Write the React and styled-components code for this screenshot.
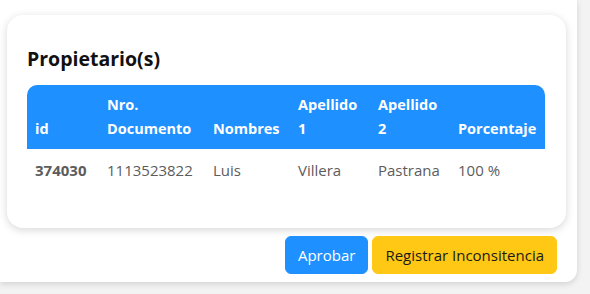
import React from "react";
import styled, { createGlobalStyle } from "styled-components";

const GlobalStyle = createGlobalStyle`
  html, body {
    margin: 0;
    padding: 0;
    background: #f3f3f3;
    font-family: "Open Sans", "Noto Sans", sans-serif;
  }
`;

const Page = styled.div`
  width: 590px;
  height: 294px;
  overflow: hidden;
`;

const Panel = styled.div`
  width: 577px;
  box-sizing: border-box;
  background: #fff;
  padding: 15px 11px 8px 7px;
  border-radius: 0 0 12px 0;
  box-shadow: 0 2px 6px rgba(0, 0, 0, 0.14);
`;

const Card = styled.div`
  background: #fff;
  border-radius: 16px;
  padding: 31px 20px 39px;
  box-shadow: 0 2px 8px rgba(0, 0, 0, 0.16);
`;

const Title = styled.h5`
  margin: 0 0 14px;
  font-size: 19.5px;
  font-weight: 700;
  line-height: 25px;
  color: #111;
`;

const Table = styled.table`
  width: 518px;
  table-layout: fixed;
  border-collapse: separate;
  border-spacing: 0;
  font-size: 14.5px;
  line-height: 24px;
`;

const Th = styled.th`
  background: #1e90ff;
  color: #fff;
  font-weight: 700;
  text-align: left;
  vertical-align: bottom;
  padding: 8px;
  &:first-child {
    border-top-left-radius: 10px;
  }
  &:last-child {
    border-top-right-radius: 10px;
  }
`;

const Td = styled.td`
  color: #5c5c5c;
  padding: 9px 8px 7px;
  font-size: 15px;
  font-weight: ${(p) => (p.$strong ? 700 : 400)};
  white-space: nowrap;
`;

const Actions = styled.div`
  display: flex;
  justify-content: flex-end;
  gap: 4px;
  margin: 8px 9px 0 0;
`;

const Button = styled.button`
  font-family: inherit;
  font-size: 15px;
  line-height: 24px;
  padding: 6px 12px;
  border: 1px solid ${(p) => (p.$variant === "warning" ? "#ffc814" : "#1e90ff")};
  border-radius: 6px;
  background: ${(p) => (p.$variant === "warning" ? "#ffc814" : "#1e90ff")};
  color: ${(p) => (p.$variant === "warning" ? "#1a1a1a" : "#fff")};
  cursor: pointer;
`;

const columns = [
  { label: "id", width: 72 },
  { label: "Nro. Documento", width: 106 },
  { label: "Nombres", width: 85 },
  { label: "Apellido 1", width: 80 },
  { label: "Apellido 2", width: 80 },
  { label: "Porcentaje", width: 95 },
];

const owners = [
  {
    id: "374030",
    documento: "1113523822",
    nombres: "Luis",
    apellido1: "Villera",
    apellido2: "Pastrana",
    porcentaje: "100 %",
  },
];

export default function App() {
  return (
    <Page>
      <GlobalStyle />
      <Panel>
        <Card>
          <Title>Propietario(s)</Title>
          <Table>
            <colgroup>
              {columns.map((c) => (
                <col key={c.label} style={{ width: c.width }} />
              ))}
            </colgroup>
            <thead>
              <tr>
                {columns.map((c) => (
                  <Th key={c.label}>{c.label}</Th>
                ))}
              </tr>
            </thead>
            <tbody>
              {owners.map((o) => (
                <tr key={o.id}>
                  <Td $strong>{o.id}</Td>
                  <Td>{o.documento}</Td>
                  <Td>{o.nombres}</Td>
                  <Td>{o.apellido1}</Td>
                  <Td>{o.apellido2}</Td>
                  <Td>{o.porcentaje}</Td>
                </tr>
              ))}
            </tbody>
          </Table>
        </Card>
        <Actions>
          <Button>Aprobar</Button>
          <Button $variant="warning">Registrar Inconsitencia</Button>
        </Actions>
      </Panel>
    </Page>
  );
}
